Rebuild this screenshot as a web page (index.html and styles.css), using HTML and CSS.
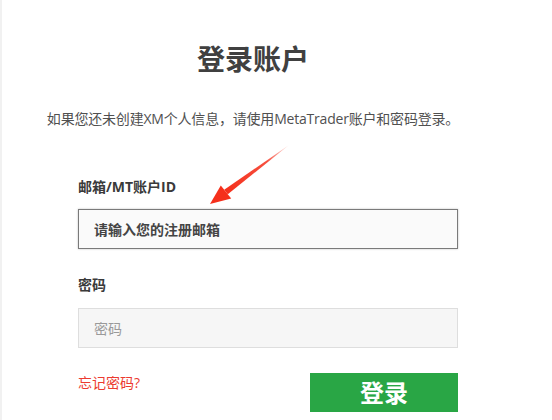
FILE: index.html
```html
<!DOCTYPE html>
<html lang="zh-CN">
<head>
<meta charset="utf-8">
<title>登录账户</title>
<link rel="stylesheet" href="styles.css">
</head>
<body>
<div class="page">
  <h1 class="title">登录账户</h1>
  <p class="intro">如果您还未创建XM个人信息，请使用MetaTrader账户和密码登录。</p>
  <form class="form">
    <label class="label label-first">邮箱/MT账户ID</label>
    <input class="field field-active" type="text" placeholder="请输入您的注册邮箱">
    <label class="label label-second">密码</label>
    <input class="field field-idle" type="password" placeholder="密码">
    <div class="actions">
      <a class="forgot" href="#">忘记密码?</a>
      <button class="submit" type="button">登录</button>
    </div>
  </form>
  <svg class="arrow" width="100" height="70" viewBox="200 140 100 70" aria-hidden="true">
    <defs>
      <linearGradient id="ag" gradientUnits="userSpaceOnUse" x1="289" y1="145" x2="226" y2="192">
        <stop offset="0" stop-color="#f5301c" stop-opacity="0.1"/>
        <stop offset="0.35" stop-color="#f5301c" stop-opacity="0.85"/>
        <stop offset="1" stop-color="#f5301c"/>
      </linearGradient>
    </defs>
    <polygon points="289,145 227.8,194.2 224.2,189.8" fill="url(#ag)"/>
    <polygon points="210,204 231.2,198.6 220.8,185.4" fill="#f5301c"/>
  </svg>
</div>
</body>
</html>
```
FILE: styles.css
```css
html, body {
  margin: 0;
  padding: 0;
  background: #ffffff;
}
body {
  font-family: "Open Sans", "Noto Sans CJK SC", sans-serif;
  height: 420px;
  overflow: hidden;
}
.page {
  position: relative;
  display: flow-root;
  width: 502px;
  height: 420px;
  border-left: 2px solid #f1f1f1;
}
.title {
  margin: 39px 0 0;
  font-size: 28px;
  line-height: 40px;
  font-weight: bold;
  color: #404040;
  text-align: center;
}
.intro {
  margin: 30px 0 0;
  font-size: 14px;
  line-height: 20px;
  letter-spacing: -0.2px;
  color: #505050;
  text-align: center;
}
.form {
  margin: 0 0 0 76px;
  width: 380px;
}
.label {
  display: block;
  font-size: 14px;
  line-height: 20px;
  font-weight: bold;
  color: #3a3a3a;
}
.label-first { margin-top: 48px; }
.label-second { margin-top: 26px; }
.field {
  display: block;
  box-sizing: border-box;
  width: 380px;
  height: 40px;
  padding: 0 15px;
  font-family: "Open Sans", "Noto Sans CJK SC", sans-serif;
  font-size: 14px;
  outline: none;
}
.field-active {
  margin-top: 12px;
  border: 1px solid #7a7a7a;
  background: #fafafa;
  box-shadow: 0 0 2px rgba(0, 0, 0, 0.25);
}
.field-active::placeholder {
  color: #444444;
  font-weight: bold;
}
.field-idle {
  margin-top: 13px;
  border: 1px solid #dedede;
  background: #f6f6f6;
}
.field-idle::placeholder {
  color: #9a9a9a;
}
.actions {
  margin-top: 25px;
  display: flex;
  justify-content: space-between;
  align-items: flex-start;
}
.forgot {
  font-size: 14px;
  line-height: 20px;
  color: #ec3b30;
  text-decoration: none;
}
.submit {
  width: 148px;
  height: 39px;
  border: none;
  background: #29a645;
  color: #ffffff;
  font-family: "Open Sans", "Noto Sans CJK SC", sans-serif;
  font-size: 24px;
  font-weight: bold;
  line-height: 39px;
  padding: 0;
}
.arrow {
  position: absolute;
  left: 198px;
  top: 140px;
}
```
